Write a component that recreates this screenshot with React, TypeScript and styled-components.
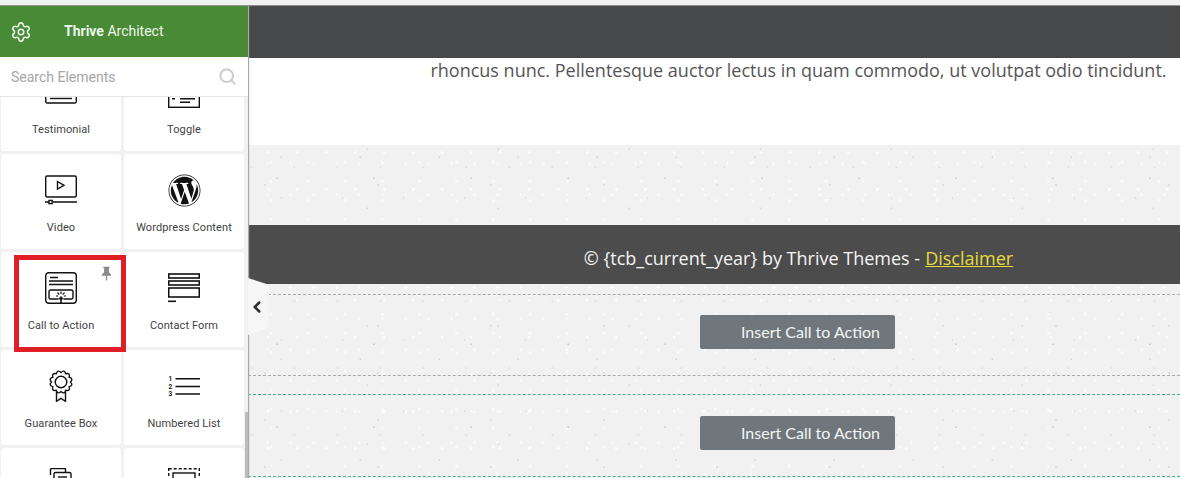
import React from "react";
import styled, { createGlobalStyle } from "styled-components";
import { Search, Settings, ChevronLeft } from "lucide-react";
import { FaWordpress } from "react-icons/fa";

const Global = createGlobalStyle`
  html, body { margin: 0; padding: 0; width: 1180px; height: 478px; overflow: hidden; background: #fff; }
  * { box-sizing: border-box; }
`;

const speckle = `
  background-color: #f1f1f1;
  background-image:
    radial-gradient(circle at 30% 40%, #cfcfcf 0.6px, transparent 1.1px),
    radial-gradient(circle at 70% 20%, #fcfcfc 1px, transparent 1.6px),
    radial-gradient(circle at 55% 75%, #dadada 0.6px, transparent 1.1px),
    radial-gradient(circle at 15% 85%, #dedede 0.8px, transparent 1.3px),
    radial-gradient(circle at 85% 60%, #fbfbfb 0.9px, transparent 1.5px),
    radial-gradient(circle at 42% 12%, #d4d4d4 0.5px, transparent 1px),
    radial-gradient(circle at 8% 33%, #e2e2e2 0.8px, transparent 1.3px),
    radial-gradient(circle at 63% 91%, #fafafa 1px, transparent 1.6px),
    radial-gradient(circle at 91% 7%, #d8d8d8 0.5px, transparent 1px);
  background-size: 97px 83px, 29px 37px, 61px 71px, 113px 47px, 23px 31px, 79px 101px, 43px 67px, 37px 19px, 131px 59px;
`;

const Page = styled.div`
  width: 1180px;
  height: 478px;
  display: flex;
  flex-direction: column;
  overflow: hidden;
`;
const TopStrip = styled.div`
  height: 6px;
  flex: none;
  background: #f1f1f1;
  border-bottom: 1px solid #8c8c8c;
`;
const Body = styled.div`
  flex: 1;
  display: flex;
  min-height: 0;
  position: relative;
`;
const Sidebar = styled.aside`
  width: 248px;
  flex: none;
  display: flex;
  flex-direction: column;
  background: #f1f1f1;
  box-shadow: 1px 0 1px #a8a8a8;
  position: relative;
  z-index: 2;
`;
const Brand = styled.header`
  height: 51px;
  flex: none;
  display: flex;
  align-items: center;
  padding-left: 10px;
  background: #488a36;
  color: #eef6ea;
  font: 400 14px/1 Roboto, sans-serif;
  b { font-weight: 700; }
`;
const BrandName = styled.span`
  margin-left: 32px;
  margin-top: -1px;
`;
const SearchBar = styled.div`
  height: 40px;
  flex: none;
  display: flex;
  align-items: center;
  justify-content: space-between;
  padding: 0 11px;
  background: #fff;
  border-bottom: 1px solid #e6e6e6;
  position: relative;
  z-index: 2;
  color: #a4a6a8;
  font: 400 14px/1 Roboto, sans-serif;
`;
const Scroller = styled.div`
  flex: 1;
  min-height: 0;
  position: relative;
  overflow: hidden;
`;
const Grid = styled.div`
  display: grid;
  grid-template-columns: 120px 120px;
  grid-auto-rows: 95px;
  gap: 3px;
  margin-top: -41px;
  padding-left: 1px;
`;
const Card = styled.div`
  position: relative;
  display: flex;
  flex-direction: column;
  align-items: center;
  background: #fff;
  border-radius: 3px;
  padding-top: 16px;
`;
const IconSlot = styled.div`
  height: 40px;
  display: flex;
  align-items: center;
  justify-content: center;
  color: #111;
`;
const Label = styled.div`
  margin-top: 11px;
  font: 400 11px/14px Roboto, sans-serif;
  letter-spacing: 0.1px;
  color: #3f3f3f;
  white-space: nowrap;
`;
const RedFrame = styled.div`
  position: absolute;
  left: 13px;
  top: 3px;
  width: 112px;
  height: 97px;
  border: 5px solid #e01e26;
  z-index: 3;
`;
const Pin = styled.svg`
  position: absolute;
  left: 100px;
  top: 14px;
  width: 11px;
  height: 15px;
  z-index: 4;
`;
const Thumb = styled.div`
  position: absolute;
  right: 0;
  top: 315px;
  width: 3px;
  height: 70px;
  background: #bcbcbc;
`;
const Main = styled.main`
  flex: 1;
  min-width: 0;
  display: flex;
  flex-direction: column;
`;
const DarkBar = styled.div`
  height: 52px;
  flex: none;
  background: #474849;
`;
const Intro = styled.section`
  height: 87px;
  flex: none;
  background: #fff;
  padding: 0 13px 0 182px;
  font: 400 18px/24px "Open Sans", sans-serif;
  color: #555;
  text-align: center;
  white-space: nowrap;
`;
const Texture = styled.div`
  flex: 1;
  min-height: 0;
  display: flex;
  flex-direction: column;
  ${speckle}
`;
const Spacer = styled.div<{ $h: number }>`
  height: ${(p) => p.$h}px;
  flex: none;
`;
const Footer = styled.footer`
  height: 59px;
  flex: none;
  display: flex;
  align-items: center;
  justify-content: center;
  padding: 7px 13px 0 182px;
  background: #4c4c4c;
  color: #f4f4f4;
  font: 400 18px/1 "Open Sans", sans-serif;
  a { color: #e6dc3c; text-decoration: underline; margin-left: 0.28em; }
`;
const InsertRow = styled.div<{ $color: string; $top: number; $h: number }>`
  height: ${(p) => p.$h}px;
  flex: none;
  display: flex;
  align-items: flex-start;
  justify-content: center;
  padding: ${(p) => p.$top}px 15px 0 182px;
  border-top: 1px dashed ${(p) => p.$color};
  border-bottom: 1px dashed ${(p) => p.$color};
`;
const InsertButton = styled.div`
  width: 195px;
  height: 34px;
  display: flex;
  align-items: center;
  padding-left: 41px;
  background: #6f777d;
  border-radius: 2px;
  color: #f4f5f5;
  font: 400 16px/1 Lato, sans-serif;
  white-space: nowrap;
`;
const CollapseTab = styled.div`
  position: absolute;
  left: 248px;
  top: 272px;
  width: 21px;
  height: 57px;
  display: flex;
  align-items: center;
  background: #f6f6f6;
  color: #2f2f2f;
  clip-path: polygon(0 0, 100% 12%, 100% 87%, 0 100%);
  z-index: 3;
`;

const Ico = ({ children }: { children: React.ReactNode }) => (
  <svg width="32" height="32" viewBox="0 0 32 32" fill="none" stroke="currentColor" strokeWidth="1.4">
    {children}
  </svg>
);

const scallop = (() => {
  const n = 12;
  let d = "";
  for (let i = 0; i < n; i++) {
    const a = (i / n) * Math.PI * 2;
    const m = ((i + 0.5) / n) * Math.PI * 2;
    const b = ((i + 1) / n) * Math.PI * 2;
    const p = (r: number, t: number) => `${(16 + r * Math.cos(t)).toFixed(2)} ${(12 + r * Math.sin(t)).toFixed(2)}`;
    d += i === 0 ? `M${p(9.5, a)}` : "";
    d += `Q${p(13.2, m)} ${p(9.5, b)}`;
  }
  return d + "Z";
})();

const TestimonialIcon = () => (
  <Ico>
    <rect x="0.7" y="6" width="30.6" height="21" rx="1.5" />
    <path d="M5 22.5h22" />
  </Ico>
);
const ToggleIcon = () => (
  <Ico>
    <rect x="0.7" y="14" width="30.6" height="17.3" />
    <path d="M4 22.7h3M12 22.7h15M12 26.3h10" />
  </Ico>
);
const VideoIcon = () => (
  <Ico>
    <rect x="0.7" y="2" width="30.6" height="21" rx="1.5" />
    <path d="M12.5 7.5l6.5 3.8-6.5 3.8z" />
    <path d="M0 28h4M8 28h24" />
    <rect x="4" y="26.4" width="3.2" height="3.2" />
  </Ico>
);
const CtaIcon = () => (
  <Ico>
    <rect x="0.7" y="0.7" width="30.6" height="30.6" rx="3" />
    <path d="M5 5.5h8M4 9h24M4 12.5h24" />
    <path d="M13.5 27H5.5A1.5 1.5 0 0 1 4 25.5v-6A1.5 1.5 0 0 1 5.5 18h21a1.5 1.5 0 0 1 1.5 1.5v6a1.5 1.5 0 0 1-1.5 1.5H18.5" />
    <path d="M16 32v-6" strokeWidth="1.6" />
    <path d="M13.8 27l2.2-2.6 2.2 2.6z" fill="currentColor" strokeWidth="0.8" />
    <path d="M16 19.5v2.6M12.4 20.6l1.9 1.9M19.6 20.6l-1.9 1.9M11 24h2.2M18.8 24H21" strokeWidth="1.2" />
  </Ico>
);
const ContactIcon = () => (
  <Ico>
    <rect x="0.7" y="2" width="30.6" height="4" strokeWidth="1.6" />
    <rect x="0.7" y="9" width="30.6" height="4" strokeWidth="1.6" />
    <rect x="0.7" y="16" width="30.6" height="9" strokeWidth="1.6" />
    <path d="M0 29.3h8" strokeWidth="1.6" />
  </Ico>
);
const GuaranteeIcon = () => (
  <Ico>
    <path d={scallop} />
    <circle cx="16" cy="12" r="5.8" />
    <path d="M11.5 22v9.3l4.5-3 4.5 3V22" />
  </Ico>
);
const NumberedIcon = () => (
  <Ico>
    <text x="0.5" y="10.5" fontSize="6.5" fontWeight="700" fontFamily="Roboto, sans-serif" fill="currentColor" stroke="none">1</text>
    <text x="0.5" y="18.5" fontSize="6.5" fontWeight="700" fontFamily="Roboto, sans-serif" fill="currentColor" stroke="none">2</text>
    <text x="0.5" y="26" fontSize="6.5" fontWeight="700" fontFamily="Roboto, sans-serif" fill="currentColor" stroke="none">3</text>
    <path d="M7.5 8.7H32M7.5 16.5H32M7.5 24H32" />
  </Ico>
);
const StackIcon = () => (
  <Ico>
    <path d="M5.5 7V1.5a1 1 0 0 1 1-1h13a1 1 0 0 1 1 1V4" />
    <rect x="9" y="4.5" width="17" height="22" rx="1.5" />
    <path d="M13 9h9" />
  </Ico>
);
const ImageFrameIcon = () => (
  <Ico>
    <rect x="0.7" y="0.7" width="30.6" height="30.6" strokeDasharray="3 2" />
    <rect x="5" y="5" width="22" height="22" />
    <path d="M5 14l7 7 5-5 4 4" />
  </Ico>
);

const items: { label?: string; key: string; icon: React.ReactNode; marked?: boolean }[] = [
  { key: "t", label: "Testimonial", icon: <TestimonialIcon /> },
  { key: "o", label: "Toggle", icon: <ToggleIcon /> },
  { key: "v", label: "Video", icon: <VideoIcon /> },
  { key: "w", label: "Wordpress Content", icon: <FaWordpress size={33} /> },
  { key: "c", label: "Call to Action", icon: <CtaIcon />, marked: true },
  { key: "f", label: "Contact Form", icon: <ContactIcon /> },
  { key: "g", label: "Guarantee Box", icon: <GuaranteeIcon /> },
  { key: "n", label: "Numbered List", icon: <NumberedIcon /> },
  { key: "s", icon: <StackIcon /> },
  { key: "i", icon: <ImageFrameIcon /> },
];

export default function App() {
  return (
    <Page>
      <Global />
      <TopStrip />
      <Body>
        <Sidebar>
          <Brand>
            <Settings size={22} strokeWidth={1.7} />
            <BrandName>
              <b>Thrive</b> Architect
            </BrandName>
          </Brand>
          <SearchBar>
            <span>Search Elements</span>
            <Search size={19} color="#cfcfcf" strokeWidth={2.6} />
          </SearchBar>
          <Scroller>
            <Grid>
              {items.map((it) => (
                <Card key={it.key}>
                  <IconSlot>{it.icon}</IconSlot>
                  {it.label && <Label>{it.label}</Label>}
                  {it.marked && (
                    <>
                      <RedFrame />
                      <Pin viewBox="0 0 12 15" fill="#8a8a8a">
                        <path d="M2.5 0h7v1.2L8.6 2v4l2.4 2.5V10H6.7v5H5.3v-5H1V8.5L3.4 6V2L2.5 1.2z" />
                      </Pin>
                    </>
                  )}
                </Card>
              ))}
            </Grid>
            <Thumb />
          </Scroller>
        </Sidebar>
        <Main>
          <DarkBar />
          <Intro>rhoncus nunc. Pellentesque auctor lectus in quam commodo, ut volutpat odio tincidunt.</Intro>
          <Texture>
            <Spacer $h={80} />
            <Footer>
              © {"{tcb_current_year}"} by Thrive Themes - <a>Disclaimer</a>
            </Footer>
            <Spacer $h={10} />
            <InsertRow $color="#a9a9a9" $top={20} $h={82}>
              <InsertButton>Insert Call to Action</InsertButton>
            </InsertRow>
            <Spacer $h={18} />
            <InsertRow $color="#4fb085" $top={21} $h={83}>
              <InsertButton>Insert Call to Action</InsertButton>
            </InsertRow>
          </Texture>
        </Main>
        <CollapseTab>
          <ChevronLeft size={18} strokeWidth={3.4} />
        </CollapseTab>
      </Body>
    </Page>
  );
}
